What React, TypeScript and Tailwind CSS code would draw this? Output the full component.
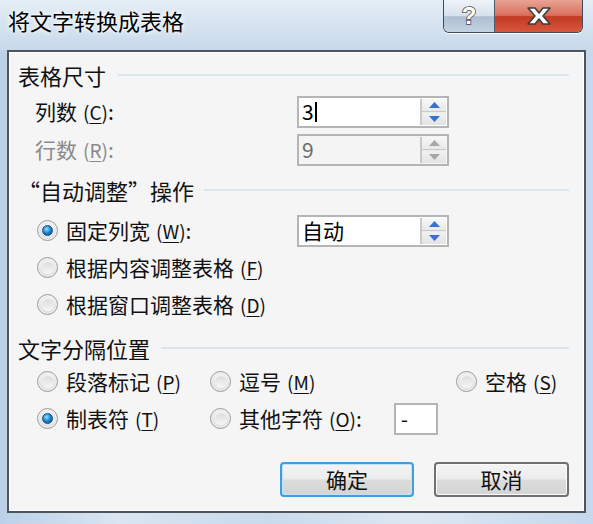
import React from "react";

const FONT = { fontFamily: '"Noto Sans CJK SC", "Noto Sans", sans-serif' };

function Mn({ c }: { c: string }) {
  return (
    <span className="ml-[6px] text-[19px]">
      (<span className="underline underline-offset-[3px]">{c}</span>)
    </span>
  );
}

function Radio({ checked }: { checked?: boolean }) {
  return (
    <span className="relative inline-flex h-[21px] w-[21px] shrink-0 items-center justify-center rounded-full border border-[#9a9a9a] bg-[radial-gradient(circle_at_50%_40%,#ffffff_0%,#e6e6e6_55%,#c9c9c9_100%)] shadow-[inset_0_0_0_1px_#f4f4f4]">
      {checked ? (
        <span className="h-[11px] w-[11px] rounded-full border border-[#1a4f7d] bg-[radial-gradient(circle_at_40%_35%,#9fe0ff_0%,#1a8ad8_45%,#0a3e7a_100%)]" />
      ) : (
        <span className="h-[12px] w-[12px] rounded-full bg-[linear-gradient(#dcdcdc,#f7f7f7)]" />
      )}
    </span>
  );
}

function Spin({ value, disabled, caret }: { value: string; disabled?: boolean; caret?: boolean }) {
  const arrow = disabled ? "#a8a8a8" : "#3c6fd6";
  return (
    <div
      className={`flex h-[32px] w-[152px] items-stretch border-2 border-[#b5b5b5] ${disabled ? "bg-[#f4f4f4]" : "bg-white"}`}
    >
      <div className={`flex flex-1 items-center pl-[3px] text-[21px] ${disabled ? "text-[#6a6a6a]" : "text-black"}`}>
        {value}
        {caret ? <span className="ml-[1px] inline-block h-[20px] w-[2px] bg-black" /> : null}
      </div>
      <div className="my-[1px] mr-[1px] flex w-[26px] flex-col border-l-2 border-[#c9c9c9]">
        <div className="flex flex-1 items-center justify-center border-b border-[#c9c9c9] bg-[linear-gradient(#f7f7f7,#e9e9e9)]">
          <svg width="11" height="6" viewBox="0 0 11 6">
            <path d="M0 6 L5.5 0 L11 6 Z" fill={arrow} />
          </svg>
        </div>
        <div className="flex flex-1 items-center justify-center border-t border-[#ececec] bg-[linear-gradient(#f1f1f1,#e3e3e3)]">
          <svg width="11" height="6" viewBox="0 0 11 6">
            <path d="M0 0 L11 0 L5.5 6 Z" fill={arrow} />
          </svg>
        </div>
      </div>
    </div>
  );
}

function Header({ text, lineStart }: { text: string; lineStart: number }) {
  return (
    <div className="flex h-[30px] items-center pr-[15px]">
      <span className="text-[22px] leading-none text-[#111]">{text}</span>
      <div className="ml-auto h-[2px] bg-[#dbe5ec]" style={{ width: lineStart }} />
    </div>
  );
}

function CloseGlyph() {
  return (
    <svg width="30" height="22" viewBox="0 0 30 22">
      <path
        d="M4 3 L11 3 L15 8 L19 3 L26 3 L19 11 L26 19 L19 19 L15 14 L11 19 L4 19 L11 11 Z"
        fill="#ffffff"
        stroke="#3b3b3b"
        strokeWidth="1.5"
        strokeLinejoin="round"
      />
    </svg>
  );
}

export default function App() {
  return (
    <div
      className="flex h-[524px] w-[593px] flex-col overflow-hidden bg-[linear-gradient(90deg,#bcd1e8_0%,#d9e5f1_20%,#c9daeb_45%,#dce7f2_70%,#c5d8ec_100%)]"
      style={FONT}
    >
      {/* title bar */}
      <div className="flex h-[50px] shrink-0 items-start bg-[linear-gradient(180deg,#e4edf6_0%,#d3e1ef_60%,#c9d9ea_100%)]">
        <div className="pl-[8px] pt-[9px] text-[22px] leading-none text-black [text-shadow:0_0_6px_#ffffff,0_0_3px_#ffffff]">
          将文字转换成表格
        </div>
        <div className="ml-auto mr-[10px] flex h-[33px] overflow-hidden rounded-b-[6px] border border-t-0 border-[#3e4a57] shadow-[0_1px_0_#ffffff]">
          <div className="flex w-[51px] items-center justify-center border-r border-[#4f5d6b] bg-[linear-gradient(180deg,#eef3f8_0%,#d6e1ec_50%,#aebfd2_52%,#c4d3e2_100%)]">
            <span
              className="text-[24px] font-bold leading-none text-white"
              style={{ fontFamily: '"Liberation Sans", sans-serif', WebkitTextStroke: "1.5px #3b4552", paintOrder: "stroke fill" }}
            >
              ?
            </span>
          </div>
          <div className="flex w-[87px] items-center justify-center bg-[linear-gradient(180deg,#e9a393_0%,#d9705c_48%,#c23a22_52%,#d6573d_100%)]">
            <CloseGlyph />
          </div>
        </div>
      </div>

      {/* client area */}
      <div className="mx-[7px] mb-[11px] flex flex-1 flex-col border-2 border-[#4d545c] bg-[#f5f5f5] pl-[9px] pt-[8px] shadow-[inset_0_0_0_1px_#ffffff]">
        <Header text="表格尺寸" lineStart={451} />

        <div className="mt-[6px] flex h-[32px] items-center">
          <span className="ml-[17px] w-[262px] text-[21px] text-[#111]">
            列数<Mn c="C" />:
          </span>
          <Spin value="3" caret />
        </div>
        <div className="mt-[6px] flex h-[32px] items-center">
          <span className="ml-[17px] w-[262px] text-[21px] text-[#8a8a8a]">
            行数<Mn c="R" />:
          </span>
          <Spin value="9" disabled />
        </div>

        <div className="mt-[9px]">
          <Header text="“自动调整”操作" lineStart={365} />
        </div>

        <div className="mt-[7px] flex h-[37px] items-center">
          <div className="ml-[19px] flex w-[260px] items-center gap-[8px] text-[21px] text-[#111]">
            <Radio checked />
            <span>
              固定列宽<Mn c="W" />:
            </span>
          </div>
          <Spin value="自动" />
        </div>
        <div className="flex h-[37px] items-center">
          <div className="ml-[19px] flex items-center gap-[8px] text-[21px] text-[#111]">
            <Radio />
            <span>
              根据内容调整表格<Mn c="F" />
            </span>
          </div>
        </div>
        <div className="flex h-[37px] items-center">
          <div className="ml-[19px] flex items-center gap-[8px] text-[21px] text-[#111]">
            <Radio />
            <span>
              根据窗口调整表格<Mn c="D" />
            </span>
          </div>
        </div>

        <div className="mt-[10px]">
          <Header text="文字分隔位置" lineStart={408} />
        </div>

        <div className="flex h-[37px] items-center text-[21px] text-[#111]">
          <div className="ml-[19px] flex w-[173px] items-center gap-[8px]">
            <Radio />
            <span>
              段落标记<Mn c="P" />
            </span>
          </div>
          <div className="flex w-[246px] items-center gap-[8px]">
            <Radio />
            <span>
              逗号<Mn c="M" />
            </span>
          </div>
          <div className="flex items-center gap-[8px]">
            <Radio />
            <span>
              空格<Mn c="S" />
            </span>
          </div>
        </div>
        <div className="flex h-[37px] items-center text-[21px] text-[#111]">
          <div className="ml-[19px] flex w-[173px] items-center gap-[8px]">
            <Radio checked />
            <span>
              制表符<Mn c="T" />
            </span>
          </div>
          <div className="flex items-center gap-[8px]">
            <Radio />
            <span>
              其他字符<Mn c="O" />:
            </span>
          </div>
          <div className="ml-[32px] flex h-[32px] w-[44px] items-center border-2 border-[#b5b5b5] bg-white pl-[5px] text-[21px]">
            -
          </div>
        </div>

        <div className="mt-[25px] flex justify-end gap-[20px] pr-[15px]">
          <button className="flex h-[35px] w-[134px] items-center justify-center rounded-[4px] border-2 border-[#3c9fe0] bg-[linear-gradient(180deg,#f4f4f4_0%,#ececec_48%,#dcdcdc_52%,#d4d4d4_100%)] text-[21px] text-[#111] shadow-[inset_0_0_0_1px_#bfe4fa]">
            确定
          </button>
          <button className="flex h-[35px] w-[135px] items-center justify-center rounded-[4px] border-2 border-[#707070] bg-[linear-gradient(180deg,#f4f4f4_0%,#ececec_48%,#dcdcdc_52%,#d4d4d4_100%)] text-[21px] text-[#111] shadow-[inset_0_0_0_1px_#fbfbfb]">
            取消
          </button>
        </div>
      </div>
    </div>
  );
}
